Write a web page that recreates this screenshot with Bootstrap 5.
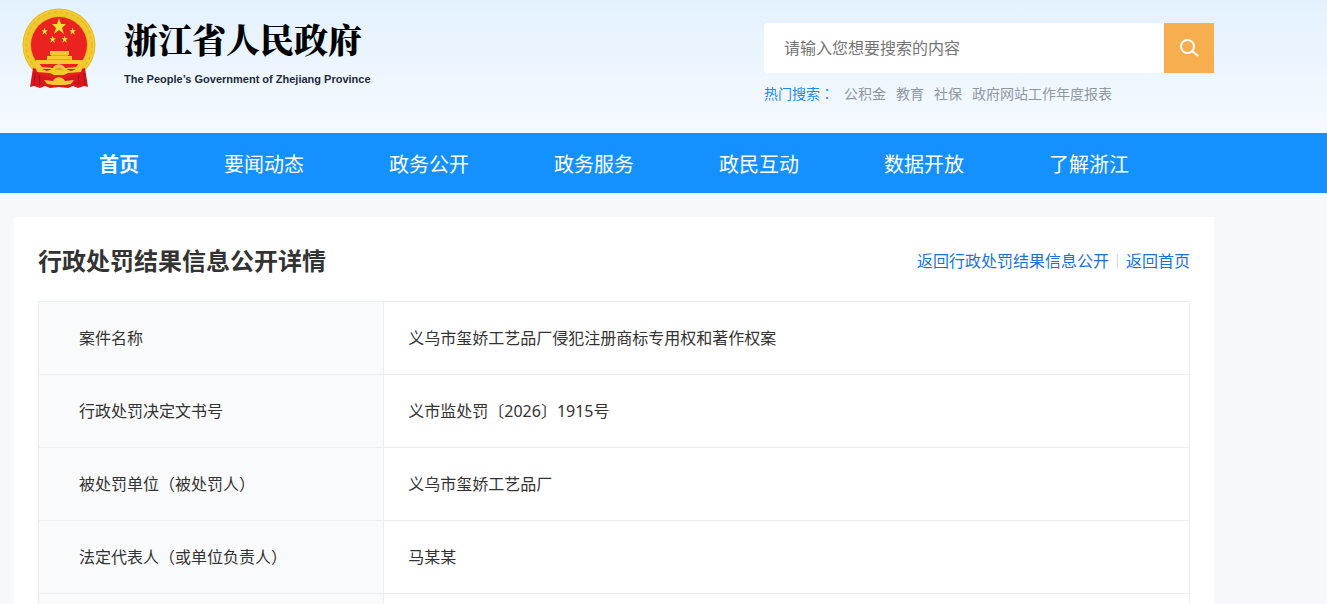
<!DOCTYPE html>
<html lang="zh-CN">
<head>
<meta charset="utf-8">
<meta name="viewport" content="width=device-width, initial-scale=1">
<title>行政处罚结果信息公开详情</title>
<link href="https://cdn.jsdelivr.net/npm/bootstrap@5.3.0/dist/css/bootstrap.min.css" rel="stylesheet">
<style>
body{font-family:"Noto Sans","Noto Sans CJK SC",sans-serif;font-size:16px;line-height:24px;color:#333;background:#f7f8fb}
a{text-decoration:none}
.page-wrap{max-width:1200px;margin-left:14px}
.site-head{background:linear-gradient(#e3f1ff,#f6faff);height:133px}
.brand-block{padding:19px 0 0 27px}
.brand-name{font-family:"Noto Serif CJK SC","Noto Sans CJK SC",serif;font-weight:900;font-size:34px;line-height:40px;color:#000}
.brand-en{font-family:"Liberation Sans",sans-serif;font-weight:700;font-size:11px;line-height:16px;color:#222b38;margin-top:12px}
.search-col{padding-top:23px}
.search-box{width:450px}
.search-box .form-control{height:50px;border:0;border-radius:4px 0 0 4px;padding:0 20px;font-size:16px}
.search-box .form-control::placeholder{color:#757575}
.search-btn{width:50px;height:50px;background:#f6ae4e;border:0;color:#fff}
.search-btn svg{display:block;margin:0 auto}
.hot-words{font-size:14px;line-height:20px;margin-top:11px}
.hot-words span{color:#1b8cf0}
.hot-words a{color:#8f979f}
.hot-words,.hot-list{gap:10px}
.cjk-mid{font-family:"Noto Sans CJK TC",sans-serif;line-height:1}
.main-nav{background:#1591ff}
.main-nav ul{gap:85px;padding:4px 0 0 85px}
.main-nav a{color:#fff;font-size:20px;line-height:56px}
.panel{padding:28px 24px 24px}
.panel-title{font-size:24px;line-height:32px;font-weight:700}
.back-links a{color:#1d6fdf}
.back-links .rule{width:1px;height:14px;background:#d5dbe3}
.detail-table{border:1px solid #ebeef2;table-layout:fixed}
.detail-table th,.detail-table td{height:73px;font-weight:400;padding:0 24px;border:1px solid #ebeef2;color:#333;vertical-align:middle}
.detail-table th{width:30%;padding-left:40px;background:#f9fafc}
</style>
</head>
<body>
<div class="vh-100 overflow-hidden">
<header class="site-head">
  <div class="page-wrap d-flex justify-content-between">
    <div class="d-flex">
      <svg class="ms-2 mt-2" width="75" height="82" viewBox="0 0 75 82" role="img" aria-label="国徽">
        <circle cx="37" cy="37" r="36.500" fill="#e9b822"/>
        <circle cx="37" cy="37" r="32" fill="none" stroke="#f0c930" stroke-width="6"/>
        <circle cx="37" cy="37" r="33" fill="none" stroke="#e2b122" stroke-dasharray="3 3"/>
        <circle cx="37" cy="37" r="35" fill="none" stroke="#f5d23c"/>
        <circle cx="37" cy="37" r="28" fill="#ea2220"/>
        <path d="M11 60 8 79l4-1 6 2 5-2 5 2 9-1 9 1 5-2 5 2 6-2 4 1-3-19-12 3H23z" fill="#d9161d"/>
        <path d="m13 65-1 12m5-12 1 12m44-12 1 12m-6-12-1 12" stroke="#a90e18" fill="none"/>
        <path d="M14 58h46l-2 8-14 4H30l-14-4z" fill="#e3201f"/>
        <g fill="#ffdf35">
          <path id="star" d="m37 10 2 6h5l-4 4 2 6-5-4-5 4 2-6-4-4h5z"/>
          <use href="#star" transform="translate(6 15) scale(.45)"/>
          <use href="#star" transform="translate(34 15) scale(.45)"/>
          <use href="#star" transform="translate(14 23) scale(.45)"/>
          <use href="#star" transform="translate(26 23) scale(.45)"/>
        </g>
        <path d="M28 43h19v4H28zM25 48h25v4H25zM14 52h47v4H14z" fill="#f6c831"/>
        <path d="M29 47h17v1H29zM26 51h23v1H26z" fill="#e2a91f"/>
        <path d="M12 54h4l4 5 11 1c2-5 10-5 12 0l11-1 4-5h4l-3 10-13 1-4 2H32l-4-2-13-1z" fill="#f6c831"/>
        <path d="M20 61h10l-5 2zM54 61H44l5 2z" fill="#d9161d"/>
        <path d="M33 62c1-3 7-3 8 0z" fill="#e3a21c"/>
        <path d="M22 72l9 1c2-5 10-5 12 0l9-1-3 4-6 1H31l-6-1z" fill="#f6c831"/>
      </svg>
      <div class="brand-block">
        <div class="brand-name">浙江省人民政府</div>
        <div class="brand-en">The People’s Government of Zhejiang Province</div>
      </div>
    </div>
    <div class="search-col">
      <form class="search-box d-flex" onsubmit="return false">
        <input class="form-control shadow-none" type="text" aria-label="搜索" placeholder="请输入您想要搜索的内容">
        <button class="search-btn p-0 flex-shrink-0" type="submit" aria-label="搜索">
          <svg width="20" height="20" viewBox="0 0 20 20" fill="none" stroke="currentColor" stroke-width="2"><circle cx="8.500" cy="8.500" r="6.500"/><path d="m13 13 6 5"/></svg>
        </button>
      </form>
      <div class="hot-words d-flex">
        <span>热门搜索<span class="cjk-mid" lang="zh-TW">：</span></span>
        <div class="hot-list d-flex"><a href="#">公积金</a><a href="#">教育</a><a href="#">社保</a><a href="#">政府网站工作年度报表</a></div>
      </div>
    </div>
  </div>
</header>
<nav class="main-nav" aria-label="主导航">
  <ul class="page-wrap list-unstyled d-flex mb-0">
    <li><a class="fw-bold" href="#">首页</a></li>
    <li><a href="#">要闻动态</a></li>
    <li><a href="#">政务公开</a></li>
    <li><a href="#">政务服务</a></li>
    <li><a href="#">政民互动</a></li>
    <li><a href="#">数据开放</a></li>
    <li><a href="#">了解浙江</a></li>
  </ul>
</nav>
<main class="page-wrap panel bg-white mt-4">
  <div class="d-flex justify-content-between align-items-center mb-4">
    <h1 class="panel-title mb-0">行政处罚结果信息公开详情</h1>
    <div class="back-links d-flex align-items-center gap-2">
      <a href="#">返回行政处罚结果信息公开</a><span class="rule"></span><a href="#">返回首页</a>
    </div>
  </div>
  <table class="detail-table w-100">
    <tbody>
      <tr><th scope="row">案件名称</th><td>义乌市玺娇工艺品厂侵犯注册商标专用权和著作权案</td></tr>
      <tr><th scope="row">行政处罚决定文书号</th><td>义市监处罚〔2026〕1915号</td></tr>
      <tr><th scope="row">被处罚单位（被处罚人）</th><td>义乌市玺娇工艺品厂</td></tr>
      <tr><th scope="row">法定代表人（或单位负责人）</th><td>马某某</td></tr>
      <tr><th scope="row"></th><td></td></tr>
    </tbody>
  </table>
</main>
</div>
<script src="https://cdn.jsdelivr.net/npm/bootstrap@5.3.0/dist/js/bootstrap.bundle.min.js"></script>
</body>
</html>
